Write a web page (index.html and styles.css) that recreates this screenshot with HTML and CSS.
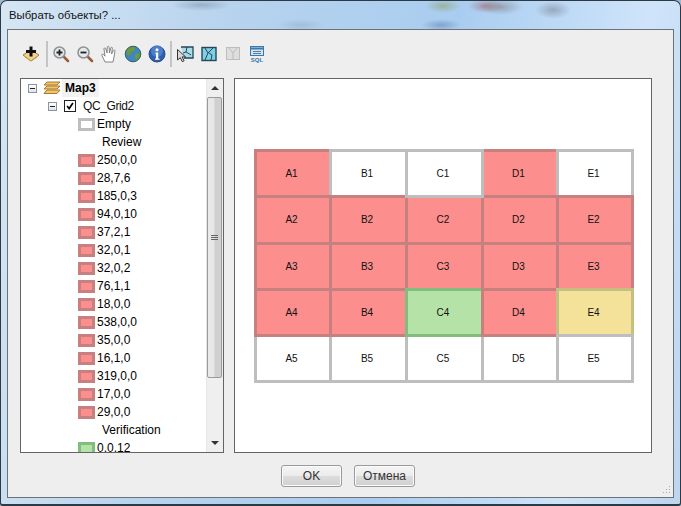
FILE: index.html
```html
<!DOCTYPE html>
<html lang="ru">
<head>
<meta charset="utf-8">
<title>Выбрать объекты? ...</title>
<link rel="stylesheet" href="styles.css">
</head>
<body>
<div class="window">
  <div class="titlebar">Выбрать объекты? ...</div>
  <div class="client">
    <div class="toolbar">
      <svg class="ic" viewBox="0 0 18 18"><path d="M1 10 9 5l8 5-8 6z" fill="#f0d48c" stroke="#a8813c"/><path d="M3 12l6 4 6-4" fill="none" stroke="#c79b4c"/><path d="M7.500 1.500h3v3.500h3.500v3h-3.500v3.500h-3v-3.500h-3.500v-3h3.500z" fill="#111"/></svg>
      <span class="sep"></span>
      <svg class="ic" viewBox="0 0 18 18"><path d="M11 11l5 5" stroke="#9b5a3c" stroke-width="2.600" stroke-linecap="round"/><circle cx="7.500" cy="7.500" r="5.500" fill="#e6e9ea" stroke="#8b9296" stroke-width="1.500"/><path d="M7.500 4.500v6M4.500 7.500h6" stroke="#222" stroke-width="1.800"/></svg>
      <svg class="ic" viewBox="0 0 18 18"><path d="M11 11l5 5" stroke="#9b5a3c" stroke-width="2.600" stroke-linecap="round"/><circle cx="7.500" cy="7.500" r="5.500" fill="#e6e9ea" stroke="#8b9296" stroke-width="1.500"/><path d="M4.500 7.500h6" stroke="#222" stroke-width="1.800"/></svg>
      <svg class="ic" viewBox="0 0 18 18"><path d="M5 17 2 10.500c-.6-1.500 1-2 1.800-.8l1.200 1.500L4 4c-.2-1.400 1.500-1.500 1.800-.2L7 8 7.300 2.300c.1-1.300 1.700-1.300 1.800 0L9.500 8l1.300-5c.3-1.200 1.800-.9 1.600.3L11.500 9l1.900-3.500c.6-1 2-.4 1.500.8L14 12l-1 5z" fill="#fff" stroke="#777" stroke-width=".9"/></svg>
      <svg class="ic" viewBox="0 0 18 18"><circle cx="9" cy="9" r="7.800" fill="#3f86c6"/><path d="M5 3c2-1.500 5-1 6 0l-1 3-3 1-1 4-3-2-1-3zM11 9l4-1 1 3-3 4-2-2z" fill="#6b9a3a"/><circle cx="9" cy="9" r="7.800" fill="none" stroke="#3b5f4d"/></svg>
      <svg class="ic" viewBox="0 0 18 18"><circle cx="9" cy="9" r="8" fill="#2c5fb0" stroke="#234d94"/><circle cx="9" cy="6" r="6" fill="#6f9edb" opacity=".5"/><circle cx="9" cy="4.800" r="1.500" fill="#fff"/><path d="M7.500 7.500h2.700v6H11.500v1.200H7v-1.200h1v-4.800H7.500z" fill="#fff"/></svg>
      <span class="sep sep-tight"></span>
      <svg class="ic" viewBox="0 0 18 18"><path d="M5 2h12v11H8" fill="#a9dbe8" stroke="#24485a" stroke-width="1.300"/><path d="M11 2 10 7l-3 1M10 7l5 3" fill="none" stroke="#24485a"/><path d="M1.500 4.500v10.500l2.800-2.300 2 4 1.800-1-2-3.800h3.500z" fill="#d8d8d8" stroke="#333"/></svg>
      <svg class="ic" viewBox="0 0 18 18"><rect x="2" y="2.500" width="14" height="13" fill="#7fd0e4" stroke="#24485a" stroke-width="1.400"/><path d="M5 3 8 8l-3 7M8 8l5-5M9 8l3 2-1 5" fill="none" stroke="#24485a"/></svg>
      <svg class="ic" viewBox="0 0 18 18"><rect x="2.500" y="2.500" width="13" height="12" fill="#dedede" stroke="#bdbdbd"/><path d="M5 3l4 5 4-5M9 8v6" fill="none" stroke="#bdbdbd"/></svg>
      <svg class="ic" viewBox="0 0 18 18"><rect x="2.500" y="1.500" width="13" height="9" fill="#cfe3f2" stroke="#3d78ab"/><path d="M3 2.500h12v2H3z" fill="#3d78ab"/><path d="M5 6.500h8M5 8.500h8" stroke="#5b7f9c"/><text x="9" y="17" class="sql">SQL</text></svg>
    </div>
    <div class="main">
      <div class="tree">
        <div class="tree-list">
          <div class="row row-map">
            <span class="exp"></span>
            <svg class="layers" viewBox="0 0 18 14"><path d="M4 1h13l-3 3H1z" fill="#f2c46d" stroke="#a87b2c"/><path d="M4 5h13l-3 3H1z" fill="#f2c46d" stroke="#a87b2c"/><path d="M4 9h13l-3 3.500H1z" fill="#f2c46d" stroke="#a87b2c"/></svg>
            <b class="map-name">Map3</b>
          </div>
          <div class="row row-layer">
            <span class="exp"></span>
            <span class="check"><svg viewBox="0 0 12 12"><path d="M2.500 6 5 9l4.500-6.500" fill="none" stroke="#000" stroke-width="2"/></svg></span>
            <span class="layer-name">QC_Grid2</span>
          </div>
          <div class="row item"><i class="sw sw-gray"></i>Empty</div>
          <div class="row group">Review</div>
          <div class="row item"><i class="sw sw-red"></i>250,0,0</div>
          <div class="row item"><i class="sw sw-red"></i>28,7,6</div>
          <div class="row item"><i class="sw sw-red"></i>185,0,3</div>
          <div class="row item"><i class="sw sw-red"></i>94,0,10</div>
          <div class="row item"><i class="sw sw-red"></i>37,2,1</div>
          <div class="row item"><i class="sw sw-red"></i>32,0,1</div>
          <div class="row item"><i class="sw sw-red"></i>32,0,2</div>
          <div class="row item"><i class="sw sw-red"></i>76,1,1</div>
          <div class="row item"><i class="sw sw-red"></i>18,0,0</div>
          <div class="row item"><i class="sw sw-red"></i>538,0,0</div>
          <div class="row item"><i class="sw sw-red"></i>35,0,0</div>
          <div class="row item"><i class="sw sw-red"></i>16,1,0</div>
          <div class="row item"><i class="sw sw-red"></i>319,0,0</div>
          <div class="row item"><i class="sw sw-red"></i>17,0,0</div>
          <div class="row item"><i class="sw sw-red"></i>29,0,0</div>
          <div class="row group">Verification</div>
          <div class="row item"><i class="sw sw-green"></i>0,0,12</div>
        </div>
        <div class="scrollbar">
          <div class="sb-btn"><span class="arrow-up"></span></div>
          <div class="thumb"><span class="grip"></span></div>
          <div class="sb-track"></div>
          <div class="sb-btn"><span class="arrow-down"></span></div>
        </div>
      </div>
      <div class="map">
        <div class="grid">
          <div class="cell red">A1</div><div class="cell white">B1</div><div class="cell white over">C1</div><div class="cell red">D1</div><div class="cell white">E1</div>
          <div class="cell red">A2</div><div class="cell red">B2</div><div class="cell red">C2</div><div class="cell red">D2</div><div class="cell red">E2</div>
          <div class="cell red">A3</div><div class="cell red">B3</div><div class="cell red">C3</div><div class="cell red">D3</div><div class="cell red">E3</div>
          <div class="cell red">A4</div><div class="cell red">B4</div><div class="cell green">C4</div><div class="cell red">D4</div><div class="cell yellow">E4</div>
          <div class="cell white under">A5</div><div class="cell white under">B5</div><div class="cell white under">C5</div><div class="cell white under">D5</div><div class="cell white">E5</div>
        </div>
      </div>
    </div>
    <div class="footer">
      <button class="btn">OK</button>
      <button class="btn">Отмена</button>
    </div>
    <svg class="grip-corner" viewBox="0 0 10 10"><path d="M8 1h1v1H8zM8 4h1v1H8zM5 4h1v1H5zM8 7h1v1H8zM5 7h1v1H5zM2 7h1v1H2z" fill="#a9a9a9"/></svg>
  </div>
</div>
</body>
</html>
```
FILE: styles.css
```css
* { box-sizing: border-box; }
html, body { margin: 0; padding: 0; height: 100%; background: #9db8d4; }
body { width: 681px; height: 506px; overflow: hidden; font-family: "Liberation Sans", Arial, sans-serif; font-size: 12px; color: #000; }

.window {
  width: 681px; height: 506px;
  padding: 0 6px 6px 6px;
  display: flex; flex-direction: column;
  border: 1px solid #2d3a44;
  border-bottom-width: 2px;
  border-radius: 7px 7px 3px 3px;
  background:
    radial-gradient(ellipse 22px 8px at 500px 6px, #7f7f7f88, transparent),
    radial-gradient(ellipse 18px 7px at 442px 5px, #8ea26d99, transparent),
    radial-gradient(ellipse 18px 7px at 485px 5px, #a3606a99, transparent),
    radial-gradient(ellipse 18px 9px at 552px 9px, #7e8a9a99, transparent),
    radial-gradient(ellipse 20px 6px at 440px 24px, #5e7fb088, transparent),
    radial-gradient(ellipse 30px 6px at 200px 4px, #55667a55, transparent),
    radial-gradient(ellipse 24px 6px at 300px 24px, #7f98b855, transparent),
    linear-gradient(100deg, #d6e6f4 0%, #b7d3ee 30%, #a9cdf0 60%, #cfe4fa 85%, #bcd6ee 100%);
}
.titlebar { height: 28px; padding: 6px 0 0 2px; font-size: 11.3px; line-height: 16px; color: #111; flex: none; }

.client {
  position: relative;
  flex: 1; min-height: 0;
  display: flex; flex-direction: column;
  background: #eeeeee;
  border: 1px solid #6e7276;
}

.toolbar { height: 48px; flex: none; display: flex; align-items: center; gap: 6px; padding: 0 0 0 14px; }
.ic { width: 18px; height: 18px; flex: none; display: block; }
.sep { width: 2px; height: 26px; background: #c4c4c4; margin-right: -2px; flex: none; }
.sep-tight { margin-left: -2px; }
.sql { font: bold 6px "Liberation Sans", sans-serif; fill: #2d78ab; text-anchor: middle; }

.main { height: 375px; flex: none; display: flex; gap: 10px; padding-left: 12px; }

.tree {
  width: 204px; height: 375px;
  display: flex;
  background: #fff;
  border: 1px solid #646464;
  overflow: hidden;
}
.tree-list { flex: 1; min-width: 0; overflow: hidden; }
.row { height: 18px; line-height: 18px; display: flex; align-items: center; white-space: nowrap; }
.row-map { padding-left: 7px; }
.row-layer { padding-left: 27px; }
.exp {
  position: relative;
  width: 9px; height: 9px; flex: none;
  border: 1px solid #8a93a3;
  background: linear-gradient(#fff, #dfe3ea);
}
.exp::after { content: ""; position: absolute; left: 1px; top: 3px; width: 5px; height: 1px; background: #222; }
.layers { width: 18px; height: 14px; margin-left: 6px; flex: none; }
.map-name { margin-left: 1px; padding: 0 3px 0 3px; background: #f2f2f2; font-size: 12px; }
.check { width: 12px; height: 12px; margin-left: 7px; flex: none; border: 1px solid #222; background: #fff; display: block; }
.check svg { width: 10px; height: 10px; display: block; }
.layer-name { margin-left: 7px; color: #111; letter-spacing: -.4px; }
.item { padding-left: 57px; }
.group { padding-left: 81px; }
.sw { width: 17px; height: 13px; flex: none; margin-right: 2px; border: 3px solid; display: block; }
.sw-gray { border-color: #bebebe; background: #fff; }
.sw-red { border-color: #c78080; background: #fc8e8e; }
.sw-green { border-color: #80bd7f; background: #b5e3a7; }

.scrollbar { width: 17px; flex: none; display: flex; flex-direction: column; background: #efefef; border-left: 1px solid #e6e6e6; }
.sb-btn { height: 18px; flex: none; display: flex; align-items: center; justify-content: center; }
.arrow-up { width: 0; height: 0; border: 4px solid transparent; border-top: 0; border-bottom: 4px solid #333; }
.arrow-down { width: 0; height: 0; border: 4px solid transparent; border-bottom: 0; border-top: 4px solid #333; }
.thumb {
  height: 281px; flex: none;
  margin-right: 1px;
  display: flex; align-items: center; justify-content: center;
  border: 1px solid #9a9a9a;
  border-radius: 2px;
  background: linear-gradient(90deg, #e9e9e9 0%, #e6e6e6 45%, #cfcfcf 55%, #d2d2d2 100%);
}
.grip { width: 7px; height: 5px; border-top: 1px solid #666; border-bottom: 1px solid #666; position: relative; }
.grip::after { content: ""; position: absolute; left: 0; right: 0; top: 1px; height: 1px; background: #666; }
.sb-track { flex: 1; min-height: 0; }

.map {
  width: 418px; height: 375px;
  padding: 70px 0 0 19px;
  background: #fff;
  border: 1px solid #646464;
}
.grid {
  isolation: isolate;
  display: grid;
  grid-template-columns: 75px 76px 76px 75px 75px;
  grid-template-rows: 46px 47px 46px 46px 46px;
}
.cell {
  margin: 0 -3px -3px 0;
  padding: 0 3px 1px 0;
  border: 3px solid;
  display: flex; align-items: center; justify-content: center;
  font-size: 10px;
  color: #111;
}
.white { border-color: #bebebe; background: #fff; }
.red { border-color: #c78080; background: #fc8e8e; }
.green { border-color: #80bd7f; background: #b5e3a7; }
.yellow { border-color: #c3c080; background: #f4e29a; }
.over { z-index: 2; }
.under { z-index: -1; }

.footer { flex: 1; min-height: 0; display: flex; justify-content: flex-start; gap: 12px; padding: 12px 0 0 273px; }
.btn {
  width: 61px; height: 22px;
  padding: 0;
  font: 12px "Liberation Sans", Arial, sans-serif;
  color: #333;
  border: 1px solid #9a9a9a;
  border-radius: 3px;
  background: linear-gradient(#f4f4f4 0%, #ececec 48%, #dcdcdc 52%, #d0d0d0 100%);
  box-shadow: inset 0 0 0 1px #fbfbfb;
}
.grip-corner { position: absolute; right: 2px; bottom: 2px; width: 10px; height: 10px; }
```
